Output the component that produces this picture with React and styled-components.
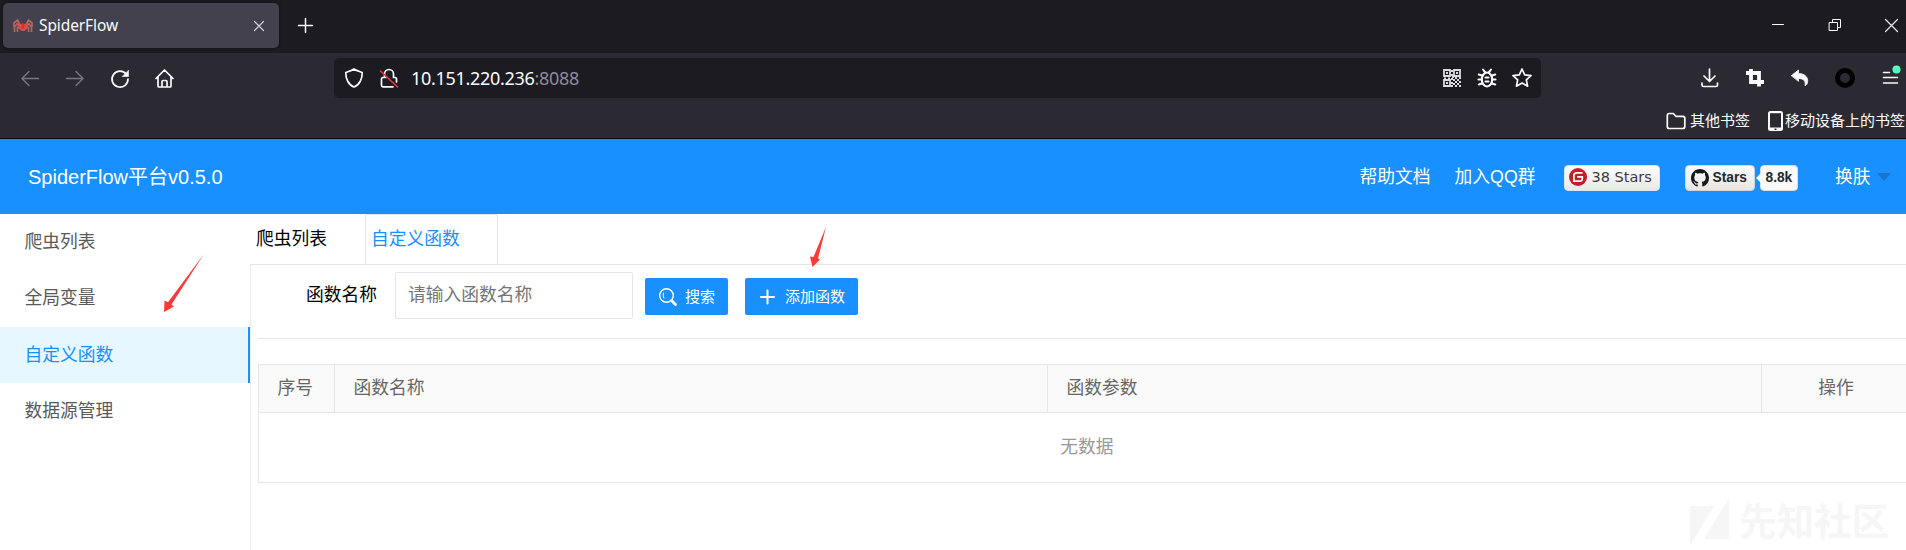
import React from "react";
import styled, { createGlobalStyle } from "styled-components";

const blue = "#1890ff";
const line = "#e6e6e6";

const GlobalStyle = createGlobalStyle`
  * { box-sizing: border-box; }
  body {
    margin: 0;
    overflow: hidden;
    background: #fff;
    font-family: "Liberation Sans", "Noto Sans CJK SC", sans-serif;
    font-size: 17.75px;
    font-weight: 400;
  }
`;

const Screen = styled.div`
  position: relative;
  width: 1906px;
  height: 550px;
  overflow: hidden;
  display: flex;
  flex-direction: column;
`;

/* ---------- browser chrome ---------- */

const TabStrip = styled.div`
  height: 53px;
  flex: none;
  background: #1c1b22;
  display: flex;
  align-items: flex-start;
  padding: 3px 8px 0 3px;
  color: #fbfbfe;
  font-family: "Noto Sans", sans-serif;
`;

const BrowserTab = styled.div`
  width: 276px;
  height: 45px;
  border-radius: 5px;
  background: #42414d;
  box-shadow: 0 0 3px rgba(0, 0, 0, 0.5);
  display: flex;
  align-items: center;
  padding: 0 15px 0 10px;
`;

const TabTitle = styled.span`
  flex: 1;
  margin: -1px 0 0 6px;
  font-size: 15.5px;
  letter-spacing: -0.1px;
  line-height: 20px;
`;

const NewTab = styled.div`
  margin: 15px 0 0 19px;
  height: 15px;
  display: flex;
`;

const WindowButtons = styled.div`
  margin: 16px 0 0 auto;
  display: flex;
  gap: 44px;
`;

const Svg = styled.svg`
  display: block;
  flex: none;
  overflow: visible;
`;

const Toolbar = styled.div`
  height: 50px;
  flex: none;
  background: #2b2a33;
  display: flex;
  align-items: center;
  padding: 0 6px 0 20px;
`;

const IconGroup = styled.div`
  display: flex;
  align-items: center;
  gap: ${(p) => p.$gap}px;
`;

const UrlBar = styled.div`
  width: 1207px;
  height: 40px;
  margin: 0 auto 0 159px;
  border-radius: 5px;
  background: #1c1b22;
  display: flex;
  align-items: center;
  padding: 0 9px 0 10px;
`;

const Url = styled.div`
  flex: 1;
  margin-left: 12px;
  font-family: "Noto Sans", sans-serif;
  font-size: 18px;
  letter-spacing: -0.3px;
  line-height: 24px;
  color: #fbfbfe;
`;

const Port = styled.span`
  color: #8f8a9d;
`;

const Bookmarks = styled.div`
  height: 36px;
  flex: none;
  background: #2b2a33;
  border-bottom: 1px solid #0c0c0d;
  display: flex;
  justify-content: flex-end;
  align-items: center;
  gap: 17px;
  padding-right: 1px;
  color: #fbfbfe;
  font-size: 15px;
`;

const Bookmark = styled.div`
  display: flex;
  align-items: center;
  gap: ${(p) => p.$gap}px;
  line-height: 20px;
  white-space: nowrap;
`;

/* ---------- application ---------- */

const Header = styled.header`
  height: 75px;
  flex: none;
  background: ${blue};
  color: #fff;
  display: flex;
  align-items: center;
  padding: 0 15px 0 28px;
`;

const Brand = styled.div`
  font-size: 20px;
  line-height: 30px;
  margin-right: auto;
`;

const HeaderLink = styled.a`
  line-height: 26px;
  margin-right: ${(p) => p.$after}px;
  white-space: nowrap;
`;

const GiteeBadge = styled.div`
  width: 96px;
  height: 26px;
  margin: 3px 25px 0 0;
  border: 1px solid #d9e3ec;
  border-radius: 4px;
  background: linear-gradient(#fcfcfc, #e9e9e9);
  color: #3c3c3c;
  display: flex;
  align-items: center;
  padding: 0 0 2px 4px;
  gap: 4px;
  font-family: "DejaVu Sans", sans-serif;
  font-size: 14.5px;
  line-height: 20px;
  white-space: nowrap;
`;

const GithubBadge = styled.div`
  height: 26px;
  display: flex;
  margin: 3px 36.5px 0 0;
  color: #24292e;
  font-size: 13.75px;
  font-weight: bold;
  line-height: 20px;
`;

const GithubButton = styled.div`
  width: 70px;
  border: 1px solid #cfd6dd;
  border-radius: 4px;
  background: linear-gradient(#fcfcfc, #e6e6e6);
  display: flex;
  align-items: center;
  gap: 3px;
  padding-left: 5px;
`;

const GithubCount = styled.div`
  position: relative;
  width: 38px;
  margin-left: 5px;
  border: 1px solid #d6dde4;
  border-radius: 4px;
  background: #fafafa;
  display: flex;
  align-items: center;
  padding-left: 4px;
  &::before {
    content: "";
    position: absolute;
    left: -5px;
    top: 7px;
    border: 5px solid transparent;
    border-right-color: #fafafa;
    border-left: 0;
  }
`;

const Caret = styled.i`
  border: 7px solid transparent;
  border-top: 8px solid #1a73cc;
  border-bottom: 0;
`;

const Body = styled.div`
  flex: 1;
  display: flex;
  min-height: 0;
`;

const Sidebar = styled.nav`
  width: 250px;
  flex: none;
`;

const MenuItem = styled.div`
  height: 56.25px;
  line-height: 56.25px;
  padding-left: 24.5px;
  color: ${(p) => (p.$active ? blue : "#595959")};
  background: ${(p) => (p.$active ? "#e6f7ff" : "transparent")};
  border-right: 2px solid ${(p) => (p.$active ? blue : "transparent")};
`;

const Main = styled.main`
  flex: 1;
  min-width: 0;
  display: flex;
  flex-direction: column;
`;

const PageTabs = styled.div`
  height: 51px;
  flex: none;
  display: flex;
  border-bottom: 1px solid ${line};
`;

const PageTab = styled.div`
  width: ${(p) => p.$width}px;
  padding-left: 5px;
  line-height: 48px;
  color: ${(p) => (p.$active ? blue : "#000")};
  border: 1px solid ${(p) => (p.$active ? line : "transparent")};
  border-bottom: 0;
  border-radius: 2px 2px 0 0;
  white-space: nowrap;
`;

const Content = styled.section`
  flex: 1;
  border-left: 1px solid #eee;
  padding: 7px 0 0 7px;
  overflow: hidden;
`;

const SearchForm = styled.div`
  height: 67px;
  border-bottom: 1px solid ${line};
  display: flex;
  align-items: flex-start;
  padding-left: 48px;
`;

const Label = styled.label`
  width: 89px;
  line-height: 46px;
  color: #000;
`;

const Input = styled.input`
  width: 238px;
  height: 47px;
  border: 1px solid ${line};
  border-radius: 2px;
  padding: 0 0 1px 12px;
  font: inherit;
  outline: none;
  &::placeholder { color: #757575; opacity: 1; }
`;

const Button = styled.button`
  width: ${(p) => p.$width}px;
  height: 37px;
  margin: 6px 0 0 ${(p) => p.$before}px;
  padding: 0 0 0 14px;
  border: 0;
  border-radius: 2px;
  background: ${blue};
  color: #fff;
  font: inherit;
  font-size: 15px;
  line-height: 37px;
  display: flex;
  align-items: center;
  gap: 8px;
  white-space: nowrap;
`;

const Table = styled.div`
  width: 1654px;
  margin-top: 25px;
  border: 1px solid ${line};
`;

const HeadRow = styled.div`
  height: 48px;
  display: grid;
  grid-template-columns: 76px 713px 714px 1fr;
  background: #fafafa;
  border-bottom: 1px solid ${line};
  color: #666;
`;

const HeadCell = styled.div`
  border-right: 1px solid ${line};
  line-height: 47px;
  padding-left: ${(p) => (p.$center ? 0 : 18.5)}px;
  text-align: ${(p) => (p.$center ? "center" : "left")};
`;

const Empty = styled.div`
  height: 69px;
  line-height: 69px;
  padding-left: 4px;
  text-align: center;
  color: #999;
`;

const Arrow = styled(Svg)`
  position: absolute;
  left: ${(p) => p.$x}px;
  top: ${(p) => p.$y}px;
`;

const Watermark = styled.div`
  position: absolute;
  left: 1690px;
  top: 498px;
  display: flex;
  align-items: center;
  gap: 10px;
  height: 48px;
  color: #f6f6f6;
  font-size: 37.5px;
  font-weight: bold;
  line-height: 48px;
  white-space: nowrap;
`;

/* ---------- icons ---------- */

const Icon = ({ size = 20, children, color = "#fbfbfe", w = 1.7 }) => (
  <Svg width={size} height={size} viewBox={`0 0 ${size} ${size}`} fill="none" stroke={color} strokeWidth={w} strokeLinecap="round" strokeLinejoin="round">
    {children}
  </Svg>
);

const SpiderIcon = () => (
  <Svg width="20" height="14" viewBox="0 0 20 14" fill="none" stroke="#b3655f" strokeWidth="1.7">
    <path d="M7 6 4.500 1 1 4v4M7 7 4 5 1.500 8v5M8 9 4.500 8.500v4.500M13 6l2.500-5L19 4v4M13 7l3-2 2.500 3v5M12 9l3.500-.5v4.500" />
    <path d="M5 4 8.500 5h3L15 4v4.500L11.500 12h-3L5 8.500z" fill="#c9534d" stroke="none" />
    <path d="M8.700 4.500h2.600v5H8.700z" fill="#ff2020" stroke="none" />
  </Svg>
);

const checker = [[11, 11], [15, 11], [13, 13], [17, 13], [11, 15], [15, 15], [13, 17], [17, 17], [9, 2], [9, 6], [10, 8], [2, 9.5], [6, 9.5], [9, 10], [9, 14], [9, 17], [13, 9], [17, 9]];

const QrIcon = () => (
  <Svg width="20" height="20" viewBox="0 0 20 20" fill="#dcdce0">
    <path d="M2 2h6v6H2zM12 2h6v6h-6zM2 12h6v6H2z" fill="none" stroke="#dcdce0" strokeWidth="1.800" />
    <path d="M4 4h2v2H4zM14 4h2v2h-2zM4 14h2v2H4z" />
    {checker.map(([x, y]) => (
      <rect key={`${x}-${y}`} x={x} y={y} width="2" height="2" />
    ))}
  </Svg>
);

const BugIcon = () => (
  <Icon w={2.1}>
    <ellipse cx="10" cy="11.500" rx="5.200" ry="7" />
    <path d="M8.500 9.500h3M8.500 13.500h3M6 1.500l2 2.700M14 1.500l-2 2.700M5 7.500 1.800 6.500M15 7.500l3.200-1M4.800 11.500H1.500M15.200 11.500h3.300M5 15.500l-3.200 1M15 15.500l3.200 1" />
  </Icon>
);

const GithubIcon = () => (
  <Svg width="18" height="18" viewBox="0 0 16 16" fill="#16181b">
    <path d="M8 0C3.580 0 0 3.580 0 8c0 3.540 2.290 6.530 5.470 7.590.4.070.55-.17.55-.38 0-.19-.01-.82-.01-1.490-2.010.37-2.530-.49-2.690-.94-.09-.23-.48-.94-.82-1.130-.28-.15-.68-.52-.01-.53.63-.01 1.080.58 1.230.82.72 1.210 1.870.87 2.330.66.07-.52.28-.87.51-1.070-1.780-.2-3.640-.89-3.640-3.950 0-.87.31-1.590.82-2.150-.08-.2-.36-1.020.08-2.120 0 0 .67-.21 2.200.82.64-.18 1.320-.27 2-.27s1.360.09 2 .27c1.530-1.040 2.200-.82 2.200-.82.44 1.100.16 1.920.08 2.120.51.56.82 1.270.82 2.150 0 3.070-1.870 3.750-3.650 3.950.29.25.54.73.54 1.480 0 1.070-.01 1.930-.01 2.200 0 .21.15.46.55.38A8.010 8.010 0 0 0 16 8c0-4.420-3.580-8-8-8z" />
  </Svg>
);

const GiteeIcon = () => (
  <Svg width="18" height="18" viewBox="0 0 18 18" fill="none">
    <circle cx="9" cy="9" r="9" fill="#c71d23" />
    <path d="M13.500 4.900H7.700Q4.900 4.900 4.900 7.700v5.500h5.800q2.600 0 2.600-2.400V8.800H8.200" stroke="#fff" strokeWidth="1.700" />
  </Svg>
);

const headings = [
  { text: "序号" },
  { text: "函数名称" },
  { text: "函数参数" },
  { text: "操作", center: true },
];

const menu = ["爬虫列表", "全局变量", "自定义函数", "数据源管理"];

export default function App() {
  return (
    <Screen>
      <GlobalStyle />
      <TabStrip>
        <BrowserTab>
          <SpiderIcon />
          <TabTitle>SpiderFlow</TabTitle>
          <Icon size={10} w={1.2} color="#d0d0d4"><path d="M.5 .5l9 9M9.500 .5l-9 9" /></Icon>
        </BrowserTab>
        <NewTab>
          <Icon size={15} w={1.5}><path d="M7.500 .5v14M.5 7.500h14" /></Icon>
        </NewTab>
        <WindowButtons>
          <Icon size={13} w={1}><path d="M.5 5.500h11" /></Icon>
          <Icon size={12} w={1}><path d="M.5 3.500h8v8h-8zM3.500 3.500v-3h8v8h-3" strokeLinejoin="miter" /></Icon>
          <Icon size={13} w={1.3} color="#e4e4e8"><path d="M.5 .5l12 12M12.500 .5l-12 12" /></Icon>
        </WindowButtons>
      </TabStrip>

      <Toolbar>
        <IconGroup $gap={25}>
          <Icon color="#77767d" w={1.5}><path d="M18.500 10.500H2M9 3.500l-7 7 7 7" /></Icon>
          <Icon color="#77767d" w={1.5}><path d="M1.500 10.500H18M11 3.500l7 7-7 7" /></Icon>
          <Icon>
            <path d="M16.500 6.500A8 8 0 1 0 18 11" />
            <path d="M18.500 2.500v6h-6z" fill="#fbfbfe" strokeWidth=".6" />
          </Icon>
          <Icon>
            <path d="M1 10.500 9.500 2l8.500 8.500M3 9v9q0 1 1 1h11q1 0 1-1V9M7 18.500v-5q0-1 1-1h3q1 0 1 1v5" />
          </Icon>
        </IconGroup>
        <UrlBar>
          <IconGroup $gap={15}>
            <Icon><path d="M10 1C7.500 2.800 4.500 3.500 1.800 4.500 1.500 10.500 4.500 17 10 19c5.500-2 8.500-8.500 8.200-14.500C15.500 3.500 12.500 2.800 10 1z" /></Icon>
            <Icon>
              <path d="M5.500 9.500V6a4.500 4.500 0 0 1 9 0v3.500h1.500q1.500 0 1.500 1.500v3M14 18.800H4q-1.500 0-1.500-1.500V11q0-1.500 1.500-1.500h3" />
              <path d="M1.500 3l17 16" stroke="#f2333c" strokeWidth="1.600" />
            </Icon>
          </IconGroup>
          <Url>10.151.220.236<Port>:8088</Port></Url>
          <IconGroup $gap={15}>
            <QrIcon />
            <BugIcon />
            <Icon><path d="M10 1l2.700 5.900 6.300.7-4.700 4.300 1.300 6.300L10 15l-5.600 3.200 1.300-6.300L1 7.600l6.300-.7z" /></Icon>
          </IconGroup>
        </UrlBar>
        <IconGroup $gap={25}>
          <Icon><path d="M9.500 1v12M4 8l5.500 5.500L15 8M2 15v2q0 1.500 1.500 1.500h12.500q1.500 0 1.500-1.500v-2" /></Icon>
          <Icon w={3.8}><path d="M1 5h13v13.500M6 1V14h13" strokeLinecap="butt" strokeLinejoin="miter" /></Icon>
          <Icon>
            <path d="M1.500 7.500 8.500 2v3.500c7 0 11 5 8.500 10.500l-2 2c1-4.500-1-7.500-6.500-7.500V13z" fill="#fbfbfe" strokeWidth=".8" />
          </Icon>
          <Icon color="#000" w={5}><circle cx="10" cy="10" r="7.500" /></Icon>
          <Icon w={1.6}>
            <path d="M3.500 4.500h6M3.500 9.500h14M3.500 15h14" />
            <circle cx="16.500" cy="1.500" r="4" fill="#54ffbd" stroke="none" />
          </Icon>
        </IconGroup>
      </Toolbar>

      <Bookmarks>
        <Bookmark $gap={4}>
          <Icon><path d="M1.300 4.500q0-2 2-2h4l2.500 2.800h7q2 0 2 2V15.500q0 2-2 2H3.300q-2 0-2-2z" /></Icon>
          其他书签
        </Bookmark>
        <Bookmark $gap={1}>
          <Svg width="17" height="20" viewBox="0 0 17 20">
            <rect x="1" y="0" width="15" height="20" rx="2.500" fill="#fbfbfe" />
            <rect x="3" y="2.200" width="11" height="14.300" fill="#2b2a33" />
            <rect x="7.500" y="17.500" width="2" height="1.500" fill="#2b2a33" />
          </Svg>
          移动设备上的书签
        </Bookmark>
      </Bookmarks>

      <Header>
        <Brand>SpiderFlow平台v0.5.0</Brand>
        <HeaderLink $after={24}>帮助文档</HeaderLink>
        <HeaderLink $after={29}>加入QQ群</HeaderLink>
        <GiteeBadge><GiteeIcon />38 Stars</GiteeBadge>
        <GithubBadge>
          <GithubButton><GithubIcon />Stars</GithubButton>
          <GithubCount>8.8k</GithubCount>
        </GithubBadge>
        <HeaderLink $after={6.5}>换肤</HeaderLink>
        <Caret />
      </Header>

      <Body>
        <Sidebar>
          {menu.map((m, i) => (
            <MenuItem key={m} $active={i === 2}>{m}</MenuItem>
          ))}
        </Sidebar>
        <Main>
          <PageTabs>
            <PageTab $width={115}>爬虫列表</PageTab>
            <PageTab $width={133} $active>自定义函数</PageTab>
          </PageTabs>
          <Content>
            <SearchForm>
              <Label>函数名称</Label>
              <Input placeholder="请输入函数名称" />
              <Button $width={83} $before={12}>
                <Icon size={18} w={1.4} color="#fff">
                  <circle cx="7.500" cy="7.500" r="6.800" />
                  <path d="M4.500 5q-1 2.500.3 5" strokeWidth="1" />
                  <path d="M12.500 12.500l4 4" strokeWidth="2.800" />
                </Icon>
                搜索
              </Button>
              <Button $width={113} $before={17}>
                <Icon size={18} w={2} color="#fff"><path d="M8.500 2.500v13M2 9h13" /></Icon>
                添加函数
              </Button>
            </SearchForm>
            <Table>
              <HeadRow>
                {headings.map((h) => (
                  <HeadCell key={h.text} $center={h.center}>{h.text}</HeadCell>
                ))}
              </HeadRow>
              <Empty>无数据</Empty>
            </Table>
          </Content>
        </Main>
      </Body>

      <Arrow $x={164} $y={254} width="40" height="58" viewBox="0 0 40 58" fill="#fb3a36">
        <path d="M40 0 7.500 50.500 10 52.500 0 58 .5 46.500 4 48.300z" />
      </Arrow>
      <Arrow $x={810} $y={227} width="17" height="40" viewBox="0 0 17 40" fill="#fb3a36">
        <path d="M16 0 8 31.500 10 32.500 2.500 40 0 29.500 3.500 30z" />
      </Arrow>
      <Watermark>
        <Svg width="39" height="48" viewBox="0 0 39 48" fill="#f6f6f6">
          <path d="M0 8h24L0 48zM39 0v41H14z" />
        </Svg>
        先知社区
      </Watermark>
    </Screen>
  );
}
